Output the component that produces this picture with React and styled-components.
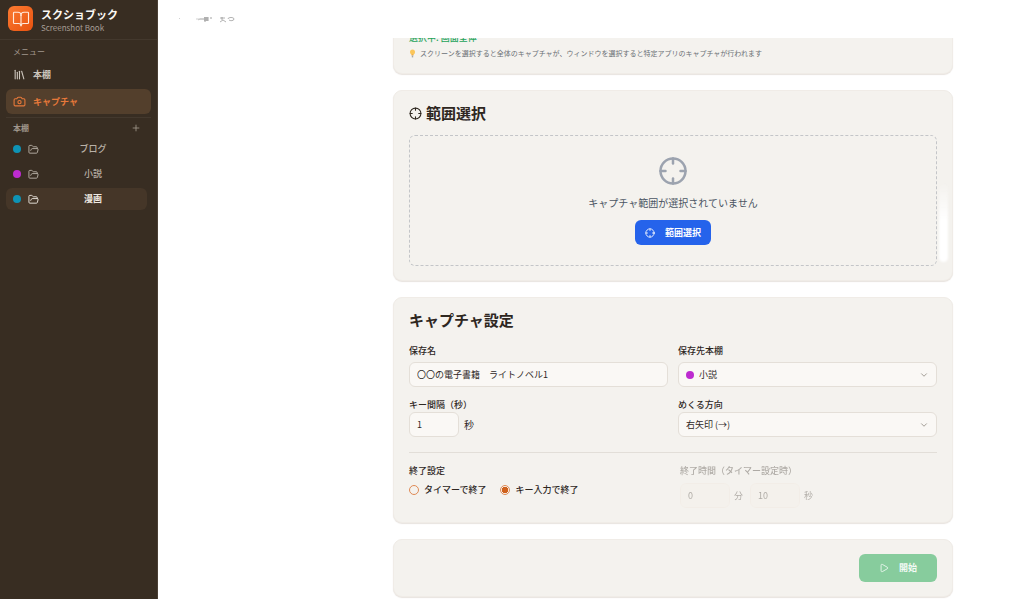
import React, { useState } from 'react'
import styled, { createGlobalStyle } from 'styled-components'
import { BookOpen, Camera, ChevronDown, Crosshair, FolderOpen, Library, Play, Plus } from 'lucide-react'

const shelves = [
  { id: 'blog', name: 'ブログ', color: '#0e93b5' },
  { id: 'novel', name: '小説', color: '#bd2bd0' },
  { id: 'manga', name: '漫画', color: '#0e93b5' },
]

const App = () => {
  const [name, setName] = useState('〇〇の電子書籍　ライトノベル1')
  const [shelf, setShelf] = useState('novel')
  const [interval, setInterval] = useState('1')
  const [direction, setDirection] = useState('right')
  const [endMode, setEndMode] = useState('key')

  const timerOff = endMode !== 'timer'
  const shelfColor = shelves.find((item) => item.id === shelf).color

  return (
    <Page>
      <GlobalStyle />
      <Sidebar>
        <Brand>
          <Logo><BookOpen size={18} strokeWidth={1.5} /></Logo>
          <BrandText>
            <BrandName>スクショブック</BrandName>
            <BrandSub>Screenshot Book</BrandSub>
          </BrandText>
        </Brand>
        <Menu>
          <MenuTitle>メニュー</MenuTitle>
          <MenuLink href="#shelf"><Library size={13} />本棚</MenuLink>
          <MenuLink href="#capture" $active><Camera size={13} />キャプチャ</MenuLink>
        </Menu>
        <ShelfHead>
          <span>本棚</span>
          <AddButton type="button" aria-label="本棚を追加"><Plus size={10} /></AddButton>
        </ShelfHead>
        <ShelfList>
          {shelves.map((item) => (
            <ShelfButton key={item.id} type="button" $active={item.id === 'manga'}>
              <Dot $color={item.color} />
              <FolderOpen size={11} />
              <span>{item.name}</span>
            </ShelfButton>
          ))}
        </ShelfList>
      </Sidebar>

      <Main>
        <TopBar>
          <Smudge viewBox="0 0 60 10" aria-hidden="true">
            <path d="M1 4l1 1M18 5h4M20 6l2-1" opacity=".3" />
            <path d="M22 5h4M27 3v5M29 3v4M26 4h5M26 6h5M32 4h2" opacity=".6" />
            <path d="M42 4h5M44 3v3M42 8l3-2 3 2M50 5c0-2 6-2 6 0s-4 2-5 1" opacity=".5" />
          </Smudge>
        </TopBar>
        <Content>
          <Card $clipped>
            <Selected>選択中: 画面全体</Selected>
            <Hint>
              <Bulb />
              スクリーンを選択すると全体のキャプチャが、ウィンドウを選択すると特定アプリのキャプチャが行われます
            </Hint>
          </Card>

          <Card>
            <Heading><Crosshair size={13} />範囲選択</Heading>
            <DropArea>
              <Crosshair size={30} color="#9ca3af" />
              <p>キャプチャ範囲が選択されていません</p>
              <PrimaryButton type="button"><Crosshair size={10} />範囲選択</PrimaryButton>
            </DropArea>
            <Glare />
          </Card>

          <Card>
            <Heading>キャプチャ設定</Heading>
            <Fields>
              <Field>
                <Label htmlFor="name">保存名</Label>
                <Box><Input id="name" value={name} onChange={(e) => setName(e.target.value)} /></Box>
              </Field>
              <Field>
                <Label htmlFor="shelf">保存先本棚</Label>
                <Box>
                  <Dot $color={shelfColor} />
                  <Select id="shelf" value={shelf} onChange={(e) => setShelf(e.target.value)}>
                    {shelves.map((item) => <option key={item.id} value={item.id}>{item.name}</option>)}
                  </Select>
                  <ChevronDown size={10} color="#918b83" />
                </Box>
              </Field>
              <Field $tight>
                <Label htmlFor="interval">キー間隔（秒）</Label>
                <Inline>
                  <Box $short><Input id="interval" value={interval} onChange={(e) => setInterval(e.target.value)} /></Box>
                  <Unit>秒</Unit>
                </Inline>
              </Field>
              <Field $tight>
                <Label htmlFor="direction">めくる方向</Label>
                <Box>
                  <Select id="direction" value={direction} onChange={(e) => setDirection(e.target.value)}>
                    <option value="right">右矢印 (→)</option>
                    <option value="left">左矢印 (←)</option>
                  </Select>
                  <ChevronDown size={10} color="#918b83" />
                </Box>
              </Field>
            </Fields>
            <EndRow>
              <EndGroup>
                <legend>終了設定</legend>
                <Radios>
                  <RadioLabel>
                    <Radio type="radio" name="end" checked={!timerOff} onChange={() => setEndMode('timer')} />
                    タイマーで終了
                  </RadioLabel>
                  <RadioLabel>
                    <Radio type="radio" name="end" checked={timerOff} onChange={() => setEndMode('key')} />
                    キー入力で終了
                  </RadioLabel>
                </Radios>
              </EndGroup>
              <TimeGroup disabled={timerOff}>
                <legend>終了時間（タイマー設定時）</legend>
                <Inline>
                  <Box $short><Input aria-label="分" defaultValue="0" /></Box>
                  <span>分</span>
                  <Box $short><Input aria-label="秒" defaultValue="10" /></Box>
                  <span>秒</span>
                </Inline>
              </TimeGroup>
            </EndRow>
          </Card>

          <Card $actions>
            <StartButton type="button"><Play size={10} />開始</StartButton>
          </Card>
        </Content>
      </Main>
    </Page>
  )
}

const Bulb = () => (
  <svg width="7" height="9" viewBox="0 0 7 9" aria-hidden="true">
    <circle cx="3.5" cy="3" r="2.5" fill="#fbc65a" />
    <path d="M2.4 5h2.2v1.4H2.4z" fill="#f5b143" />
    <path d="M2.8 6.4h1.4v2H2.8z" fill="#a9a6a0" />
  </svg>
)

const GlobalStyle = createGlobalStyle`
  * {
    box-sizing: border-box;
  }
  body {
    margin: 0;
    background: #fff;
    color: #2e271f;
    font-family: 'Noto Sans CJK JP', sans-serif;
    font-size: 9px;
    line-height: 14px;
  }
  p, h1, h2 {
    margin: 0;
  }
  button, input, select {
    font: inherit;
    color: inherit;
  }
  svg {
    flex: none;
  }
`

const Page = styled.div`
  display: flex;
  height: 100vh;
  overflow: hidden;
`

const Sidebar = styled.aside`
  flex: none;
  width: 158px;
  background: #382d22;
  border-right: 1px solid #4b4035;
  color: #cdc6bd;
`

const Brand = styled.header`
  display: flex;
  align-items: center;
  gap: 8px;
  height: 40px;
  padding: 0 8px 2px;
  border-bottom: 1px solid #43382d;
`

const Logo = styled.div`
  display: grid;
  place-items: center;
  width: 25px;
  height: 25px;
  border-radius: 6px;
  background: linear-gradient(135deg, #fb7b32, #e9520f);
  color: #ffe9dc;
`

const BrandText = styled.div`
  padding-top: 4px;
`

const BrandName = styled.h1`
  font-size: 11px;
  line-height: 13px;
  color: #fbf8f3;
`

const BrandSub = styled.p`
  font-size: 8px;
  line-height: 13px;
  color: #a69e95;
`

const Menu = styled.nav`
  padding: 5px 6px 1px;
`

const MenuTitle = styled.p`
  padding: 0 7px 3px;
  font-size: 8px;
  color: #a1978d;
`

const MenuLink = styled.a`
  display: flex;
  align-items: center;
  gap: 7px;
  height: 25px;
  margin-bottom: 2px;
  padding: 0 7px;
  border-radius: 6px;
  background: ${({ $active }) => ($active ? '#533f2c' : 'transparent')};
  color: ${({ $active }) => ($active ? '#e8793a' : '#cdc6bd')};
  font-weight: bold;
  text-decoration: none;
`

const ShelfHead = styled.div`
  display: flex;
  align-items: center;
  justify-content: space-between;
  height: 21px;
  margin: 0 6px;
  padding: 0 10px 0 7px;
  border-top: 1px solid #43382d;
  font-size: 8px;
  font-weight: bold;
  color: #a1978d;
`

const AddButton = styled.button`
  display: grid;
  padding: 0;
  border: 0;
  background: none;
`

const ShelfList = styled.div`
  display: grid;
  gap: 3px;
  padding: 0 10px 0 6px;
`

const ShelfButton = styled.button`
  display: flex;
  align-items: center;
  gap: 7px;
  height: 22px;
  padding: 0 7px;
  border: 0;
  border-radius: 6px;
  background: ${({ $active }) => ($active ? '#453628' : 'transparent')};
  color: ${({ $active }) => ($active ? '#efe9e1' : '#b9b1a7')};
  font-weight: ${({ $active }) => ($active ? 'bold' : 500)};

  span:last-child {
    flex: 1;
    text-align: center;
  }
`

const Dot = styled.span`
  flex: none;
  width: 8px;
  height: 8px;
  border-radius: 50%;
  background: ${({ $color }) => $color};
`

const Main = styled.main`
  flex: 1;
  display: flex;
  flex-direction: column;
  min-width: 0;
`

const TopBar = styled.header`
  flex: none;
  height: 38px;
  padding: 14px 20px;
`

const Smudge = styled.svg`
  display: block;
  width: 60px;
  height: 10px;
  fill: none;
  stroke: #666;
`

const Content = styled.div`
  flex: 1;
  display: flex;
  flex-direction: column;
  align-items: flex-end;
  gap: 16px;
  min-height: 0;
  padding-right: 71px;
  overflow: hidden;
`

const Card = styled.section`
  position: relative;
  flex: none;
  width: 100%;
  max-width: 560px;
  margin-top: ${({ $clipped }) => ($clipped ? '-22px' : 0)};
  padding: 14px 15px;
  border: 1px solid #f0ece7;
  border-radius: 9px;
  background: #f4f2ee;
  box-shadow: 0 1px 1px rgba(90, 60, 30, 0.14);
  ${({ $actions }) => $actions && 'display: flex; justify-content: flex-end;'}
`

const Selected = styled.p`
  font-weight: 500;
  color: #25a35a;
`

const Hint = styled.p`
  display: flex;
  align-items: center;
  gap: 4px;
  margin-top: 2px;
  font-size: 7px;
  line-height: 12px;
  color: #6b7075;
`

const Heading = styled.h2`
  display: flex;
  align-items: center;
  gap: 4px;
  margin-bottom: 14px;
  font-size: 15px;
  line-height: 16px;
  font-weight: bold;
`

const DropArea = styled.div`
  display: flex;
  flex-direction: column;
  align-items: center;
  gap: 10px;
  padding: 20px;
  border: 1px dashed #c3c5c8;
  border-radius: 6px;
  font-size: 10px;
  color: #4b5563;
`

const PrimaryButton = styled.button`
  display: flex;
  align-items: center;
  gap: 10px;
  height: 25px;
  padding: 0 10px;
  border: 0;
  border-radius: 6px;
  background: #2563eb;
  color: #fff;
  font-size: 9px;
  font-weight: bold;
`

const Glare = styled.div`
  position: absolute;
  right: 4px;
  bottom: 18px;
  width: 9px;
  height: 80px;
  border-radius: 8px 2px 5px 5px;
  background: linear-gradient(rgba(255, 255, 255, 0), #fff 50%);
  filter: blur(1px);
`

const Fields = styled.div`
  display: grid;
  grid-template-columns: 1fr 1fr;
  gap: 11px 10px;
  padding: 2px 0 15px;
`

const Field = styled.div`
  display: flex;
  flex-direction: column;
  gap: ${({ $tight }) => ($tight ? 0 : '4px')};
`

const Label = styled.label`
  font-weight: 500;
`

const Box = styled.div`
  display: flex;
  align-items: center;
  gap: 5px;
  width: ${({ $short }) => ($short ? '50px' : '100%')};
  height: 25px;
  padding: 0 7px;
  border: 1px solid #e4dfd8;
  border-radius: 6px;
  background: #faf8f5;
`

const Input = styled.input`
  width: 100%;
  min-width: 0;
  padding: 0;
  border: 0;
  outline: 0;
  background: none;
`

const Select = styled.select`
  flex: 1;
  padding: 0;
  border: 0;
  outline: 0;
  background: none;
  appearance: none;
`

const Inline = styled.div`
  display: flex;
  align-items: center;
  gap: 5px;
`

const Unit = styled.span`
  font-size: 10px;
`

const EndRow = styled.div`
  display: grid;
  grid-template-columns: 1fr 1fr;
  gap: 10px;
  padding-top: 11px;
  border-top: 1px solid #e2ded8;
`

const EndGroup = styled.fieldset`
  min-width: 0;
  margin: 0;
  padding: 0;
  border: 0;

  legend {
    padding: 0;
    font-weight: 500;
  }
`

const TimeGroup = styled(EndGroup)`
  padding: 0 2px;
  opacity: ${({ disabled }) => (disabled ? 0.35 : 1)};

  ${Inline} {
    margin-top: 5px;
    gap: 4px;
  }
  ${Box} {
    border-color: #f0e6dc;
    background: #f6f1ea;
  }
  span + ${Box} {
    margin-left: 3px;
  }
`

const Radios = styled.div`
  display: flex;
  gap: 14px;
  margin-top: 5px;
`

const RadioLabel = styled.label`
  display: flex;
  align-items: center;
  gap: 5px;
  font-weight: 500;
`

const Radio = styled.input`
  width: 10px;
  height: 10px;
  margin: 0;
  border: 1px solid #e08a55;
  border-radius: 50%;
  appearance: none;

  &:checked {
    background: radial-gradient(circle, #cf611d 0 3px, transparent 3px);
  }
`

const StartButton = styled.button`
  display: flex;
  align-items: center;
  justify-content: center;
  gap: 10px;
  width: 78px;
  height: 28px;
  padding: 0;
  border: 0;
  border-radius: 6px;
  background: #87cc9d;
  color: #f3faf5;
  font-weight: bold;
`

export default App
